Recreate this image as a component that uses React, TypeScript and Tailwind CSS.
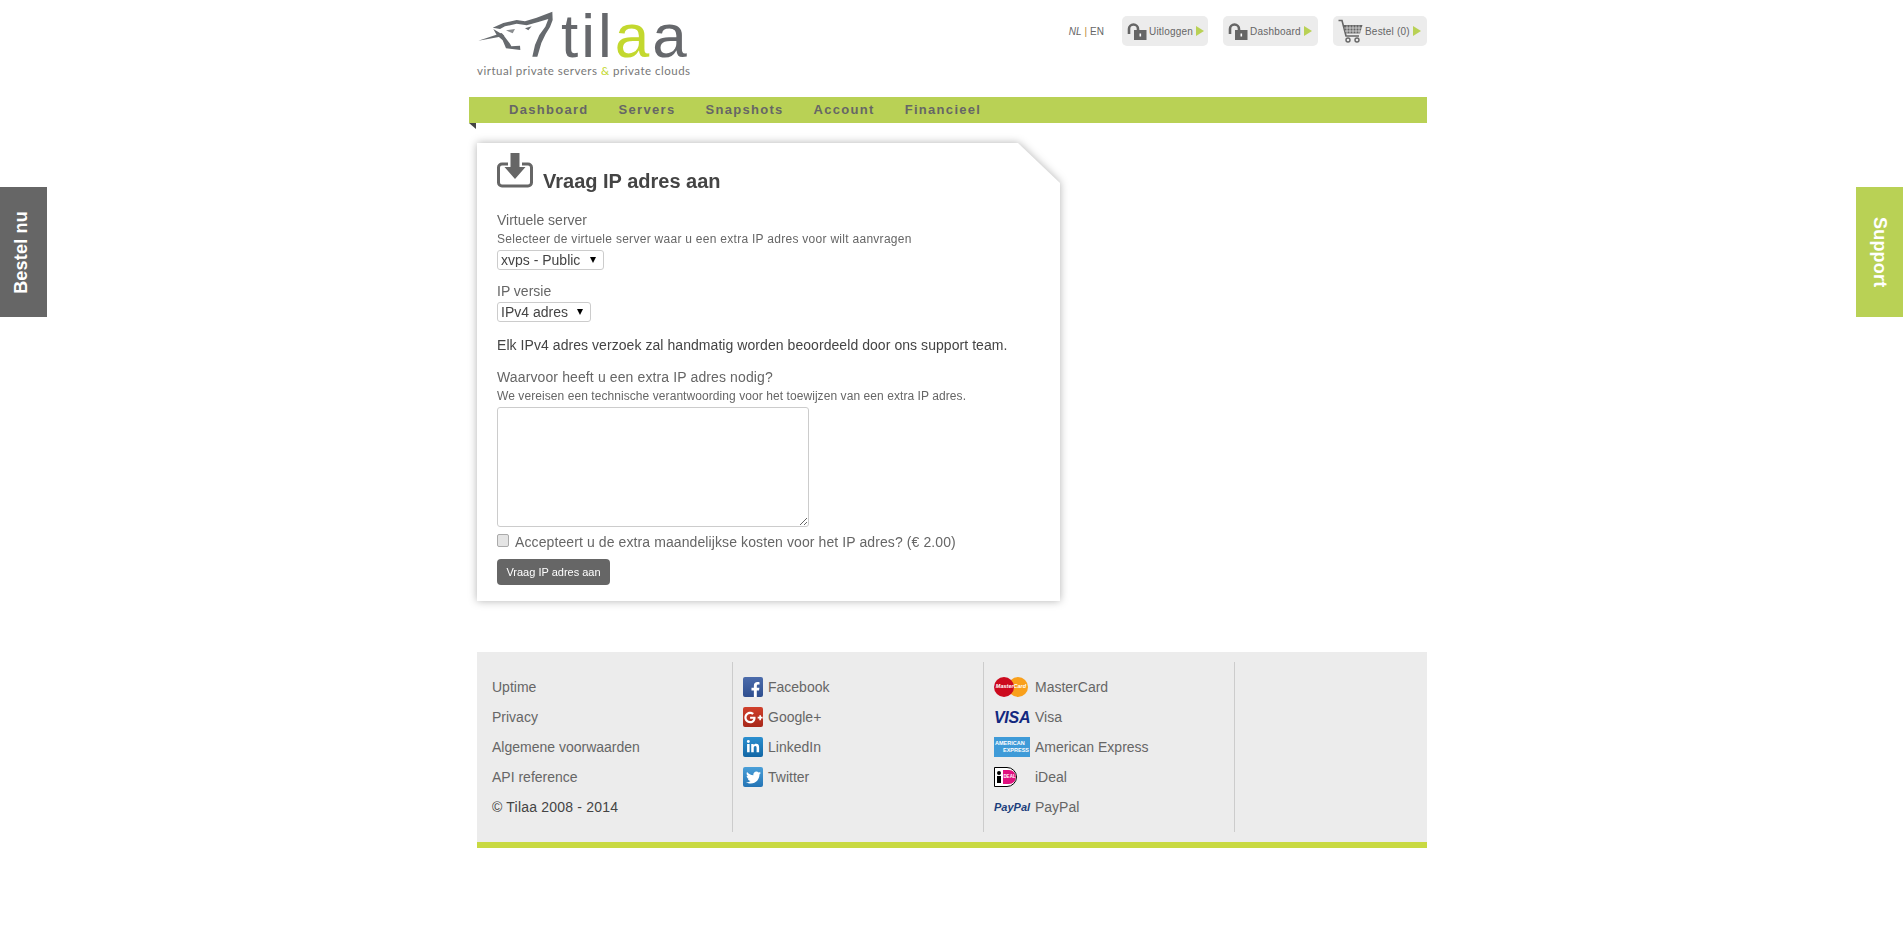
import { FaFacebookF, FaGooglePlusG, FaLinkedinIn, FaTwitter } from 'react-icons/fa'

function Triangle() {
  return <span className="inline-block w-0 h-0 border-y-[5px] border-y-transparent border-l-[8px] border-l-[#b9d155]" />
}

function LockIcon() {
  return (
    <svg width="20" height="18" viewBox="0 0 20 18" className="shrink-0">
      <path d="M2 12V7a4.500 4.500 0 0 1 9 0v1" fill="none" stroke="#666" strokeWidth="2.600" />
      <rect x="7" y="8" width="12.500" height="10" fill="#666" />
      <rect x="12.500" y="11.500" width="1.600" height="3" fill="#fff" />
    </svg>
  )
}

function CartIcon() {
  return (
    <svg width="25" height="25" viewBox="0 0 25 25" className="shrink-0">
      <path d="M0.500 1.500h3.500l4 15.500h13" fill="none" stroke="#666" strokeWidth="1.600" />
      <path d="M5.500 6h19l-2.500 8.500H8z" fill="#666" />
      <path d="M9 6.500v8M12 6.500v8M15 6.500v8M18 6.500v8M21 6.500v8M6.500 9h17.500M7 12h16" stroke="#ececec" strokeWidth="0.700" />
      <circle cx="10" cy="21" r="2" fill="none" stroke="#666" strokeWidth="1.400" />
      <circle cx="19" cy="21" r="2" fill="none" stroke="#666" strokeWidth="1.400" />
    </svg>
  )
}

function WolfLogo() {
  return (
    <svg width="90" height="60" viewBox="0 0 270 180" className="shrink-0 -ml-[7px]">
      <path d="M68 68L100 54L140 45L165 49L200 38L247 20L248 45L240 66L227 87L214 114L202 155L187 155L195 120L208 90L226 65L235 42L205 51L170 61L140 56L105 64L90 72Z" fill="#666a6e" />
      <path d="M70 72L100 90L120 116L124 124L150 122L151 135L108 130L98 106L80 90Z" fill="#666a6e" />
      <path d="M25 107L95 84L103 93Z" fill="#666a6e" />
      <path d="M165 70L185 64L175 76Z" fill="#666a6e" />
      <path d="M108 76L135 72L128 85Z" fill="#8a8d90" />
    </svg>
  )
}

function DownloadIcon() {
  return (
    <svg width="36" height="36" viewBox="0 0 36 36" className="shrink-0">
      <path d="M11 11H5a3.500 3.500 0 0 0-3.500 3.500v15A3.500 3.500 0 0 0 5 33h26a3.500 3.500 0 0 0 3.500-3.500v-15A3.500 3.500 0 0 0 31 11h-6" fill="none" stroke="#666" strokeWidth="3" />
      <path d="M13.500 0h9v14h6L18 26 7.500 14h6z" fill="#666" />
    </svg>
  )
}

function SocialIcon({ from, to, children }: { from: string; to: string; children: React.ReactNode }) {
  return (
    <span
      className="w-5 h-5 rounded-[2px] flex items-center justify-center text-white shrink-0 overflow-hidden"
      style={{ background: `linear-gradient(${from}, ${to})` }}
    >
      {children}
    </span>
  )
}

const SOCIAL = [
  { label: 'Facebook', from: '#4c6cab', to: '#2f4f8f', icon: <FaFacebookF size={15} className="mt-1 ml-1" /> },
  { label: 'Google+', from: '#d0402c', to: '#a8281a', icon: <FaGooglePlusG size={19} /> },
  { label: 'LinkedIn', from: '#2a8fd0', to: '#1367a5', icon: <FaLinkedinIn size={14} /> },
  { label: 'Twitter', from: '#4a9fd8', to: '#2474b5', icon: <FaTwitter size={15} /> },
]

function MasterCardLogo() {
  return (
    <span className="relative w-[34px] h-5 block shrink-0">
      <span className="absolute right-0 top-0 w-5 h-5 rounded-full bg-[#f9a01b]" />
      <span className="absolute left-0 top-0 w-5 h-5 rounded-full bg-[#cc0a1e]" />
      <span className="absolute inset-0 flex items-center justify-center text-[5.5px] font-bold italic text-white leading-none whitespace-nowrap">MasterCard</span>
    </span>
  )
}

function AmexLogo() {
  return (
    <span className="w-9 h-5 bg-[#3f9bd8] flex flex-col justify-center text-white text-[5.5px] leading-[7px] font-bold shrink-0 px-[1px]">
      <span>AMERICAN</span>
      <span className="text-right">EXPRESS</span>
    </span>
  )
}

function IdealLogo() {
  return (
    <span className="w-[23px] h-5 bg-white border border-black rounded-r-[10px] flex items-center overflow-hidden shrink-0">
      <span className="w-[6px] flex flex-col items-center gap-[1px] ml-[1px]">
        <span className="w-[4px] h-[4px] rounded-full bg-black" />
        <span className="w-[4px] h-[7px] bg-black" />
      </span>
      <span className="ml-[1px] w-[13px] h-[14px] bg-[#e0117f] rounded-r-[7px] text-white text-[4.5px] font-bold leading-[14px] text-center">DEAL</span>
    </span>
  )
}

const PAYMENTS = [
  { label: 'MasterCard', logo: <MasterCardLogo /> },
  { label: 'Visa', logo: <span className="w-9 shrink-0 text-[#12287f] text-[16px] leading-none font-bold italic tracking-[-0.3px] mt-[1px]">VISA</span> },
  { label: 'American Express', logo: <AmexLogo /> },
  { label: 'iDeal', logo: <IdealLogo /> },
  { label: 'PayPal', logo: <span className="w-9 shrink-0 text-[#1c3f7c] text-[11px] leading-none font-bold italic whitespace-nowrap">PayPal</span> },
]

const NAV = ['Dashboard', 'Servers', 'Snapshots', 'Account', 'Financieel']

export default function App() {
  return (
    <div className="font-['Liberation_Sans',Arial,sans-serif] bg-white min-h-[938px] text-[#666]">
      {/* Side tabs */}
      <div className="fixed left-0 top-[187px] w-[47px] h-[130px] bg-[#666] flex items-center justify-center">
        <span className="[writing-mode:vertical-rl] rotate-180 text-white font-bold text-[18px] leading-none tracking-[0.2px] -ml-[6px]">Bestel nu</span>
      </div>
      <div className="fixed right-0 top-[187px] w-[47px] h-[130px] bg-[#b9d155] flex items-center justify-center">
        <span className="[writing-mode:vertical-rl] text-white font-bold text-[18px] leading-none tracking-[0.2px]">Support</span>
      </div>

      <div className="w-[965px] mx-auto">
        <div className="w-[958px]">
          {/* Header */}
          <div className="h-[97px] flex justify-between items-start">
            <div className="ml-[8px] pt-[5px]">
              <div className="flex items-start">
                <WolfLogo />
                <span className="ml-[1px] text-[62px] leading-[62px] tracking-[3px] text-[#66686c]">
                  til<span className="text-[#c3d82e]">a</span>a
                </span>
              </div>
              <div className="font-['Lato',sans-serif] text-[11.5px] leading-[10px] tracking-[0.5px] text-[#777] -mt-[1px] whitespace-nowrap">
                virtual private servers <span className="text-[#c3d82e]">&amp;</span> private clouds
              </div>
            </div>
            <div className="flex items-start pt-[16px] text-[10px]">
              <div className="h-[30px] flex items-center mr-[18px] text-[#666]">
                <span className="italic">NL</span>
                <span className="mx-[3px] text-[#b98a3a]">|</span>
                <span>EN</span>
              </div>
              <a className="h-[30px] w-[86px] bg-[#ececec] rounded-[5px] flex items-center pl-[5px] mr-[15px] tracking-[0.2px]">
                <LockIcon />
                <span className="ml-[2px] mr-[3px]">Uitloggen</span>
                <Triangle />
              </a>
              <a className="h-[30px] w-[95px] bg-[#ececec] rounded-[5px] flex items-center pl-[5px] mr-[15px] tracking-[0.2px]">
                <LockIcon />
                <span className="ml-[2px] mr-[3px]">Dashboard</span>
                <Triangle />
              </a>
              <a className="h-[30px] w-[94px] bg-[#ececec] rounded-[5px] flex items-center pl-[5px] tracking-[0.2px]">
                <CartIcon />
                <span className="ml-[2px] mr-[3px]">Bestel (0)</span>
                <Triangle />
              </a>
            </div>
          </div>

          {/* Nav */}
          <div className="relative h-[26px] bg-[#b9d155] flex items-center pl-[40px] gap-[30px]">
            {NAV.map((item) => (
              <a key={item} className="text-[13px] font-bold tracking-[1.3px] text-[#666]">{item}</a>
            ))}
            <span className="absolute left-0 top-full w-0 h-0 border-t-[6px] border-t-[#444] border-l-[7px] border-l-transparent" />
          </div>

          {/* Card */}
          <div className="ml-[8px] mt-[20px] w-[583px] drop-shadow-[0_0_4px_rgba(0,0,0,0.3)]">
            <div className="bg-white [clip-path:polygon(0_0,541px_0,100%_40px,100%_100%,0_100%)] pl-[20px] pt-[10px] pb-[16px] h-[458px]">
              <div className="flex items-start">
                <DownloadIcon />
                <h1 className="ml-[10px] mt-[16px] text-[20px] leading-[24px] font-bold text-[#444]">Vraag IP adres aan</h1>
              </div>
              <div className="mt-[18px] text-[14px] leading-[18px]">Virtuele server</div>
              <div className="mt-[2px] text-[12px] leading-[16px] tracking-[0.28px]">Selecteer de virtuele server waar u een extra IP adres voor wilt aanvragen</div>
              <div className="relative mt-[3px] w-[107px]">
                <select defaultValue="xvps" className="block w-full h-[20px] appearance-none border border-[#ccc] rounded-[3px] bg-white text-[14px] text-[#444] leading-none pl-[3px]">
                  <option value="xvps">xvps - Public</option>
                </select>
                <span className="absolute right-[8px] top-[7px] w-0 h-0 border-x-[3.5px] border-x-transparent border-t-[6px] border-t-black pointer-events-none" />
              </div>
              <div className="mt-[12px] text-[14px] leading-[18px]">IP versie</div>
              <div className="relative mt-[2px] w-[94px]">
                <select defaultValue="v4" className="block w-full h-[20px] appearance-none border border-[#ccc] rounded-[3px] bg-white text-[14px] text-[#444] leading-none pl-[3px]">
                  <option value="v4">IPv4 adres</option>
                </select>
                <span className="absolute right-[8px] top-[7px] w-0 h-0 border-x-[3.5px] border-x-transparent border-t-[6px] border-t-black pointer-events-none" />
              </div>
              <p className="mt-[14px] text-[14px] leading-[18px] tracking-[0.06px] text-[#444]">Elk IPv4 adres verzoek zal handmatig worden beoordeeld door ons support team.</p>
              <div className="mt-[14px] text-[14px] leading-[18px] tracking-[0.12px]">Waarvoor heeft u een extra IP adres nodig?</div>
              <div className="mt-[2px] text-[12px] leading-[16px] tracking-[0.07px]">We vereisen een technische verantwoording voor het toewijzen van een extra IP adres.</div>
              <textarea className="block mt-[3px] w-[312px] h-[120px] border border-[#ccc] rounded-[3px] bg-white" />
              <label className="mt-[6px] h-[18px] flex items-center text-[14px] leading-[18px] tracking-[0.1px]">
                <input type="checkbox" className="w-[12px] h-[13px] m-0 -mt-[3px] appearance-none rounded-[2px] border border-[#aaa] bg-[#e4e4e4]" />
                <span className="ml-[6px]">Accepteert u de extra maandelijkse kosten voor het IP adres? (€ 2.00)</span>
              </label>
              <button className="block mt-[8px] w-[113px] h-[26px] bg-[#666] rounded-[4px] text-white text-[11px]">Vraag IP adres aan</button>
            </div>
          </div>

          {/* Footer */}
          <div className="ml-[8px] mt-[51px] h-[196px] bg-[#ececec] border-b-[6px] border-b-[#c8d942] py-[10px] flex text-[14px] leading-[30px]">
            <div className="w-[256px] h-[170px] pt-[10px] pl-[15px] border-r border-r-[#ccc]">
              <div>Uptime</div>
              <div>Privacy</div>
              <div>Algemene voorwaarden</div>
              <div>API reference</div>
              <div className="text-[#444] tracking-[0.2px]">© Tilaa 2008 - 2014</div>
            </div>
            <div className="w-[251px] h-[170px] pt-[10px] pl-[10px] border-r border-r-[#ccc]">
              {SOCIAL.map((s) => (
                <div key={s.label} className="h-[30px] flex items-center gap-[5px]">
                  <SocialIcon from={s.from} to={s.to}>{s.icon}</SocialIcon>
                  <span>{s.label}</span>
                </div>
              ))}
            </div>
            <div className="w-[251px] h-[170px] pt-[10px] pl-[10px] border-r border-r-[#ccc]">
              {PAYMENTS.map((p) => (
                <div key={p.label} className="h-[30px] flex items-center">
                  <span className="w-[41px] shrink-0 flex items-center">{p.logo}</span>
                  <span>{p.label}</span>
                </div>
              ))}
            </div>
          </div>
        </div>
      </div>
    </div>
  )
}
